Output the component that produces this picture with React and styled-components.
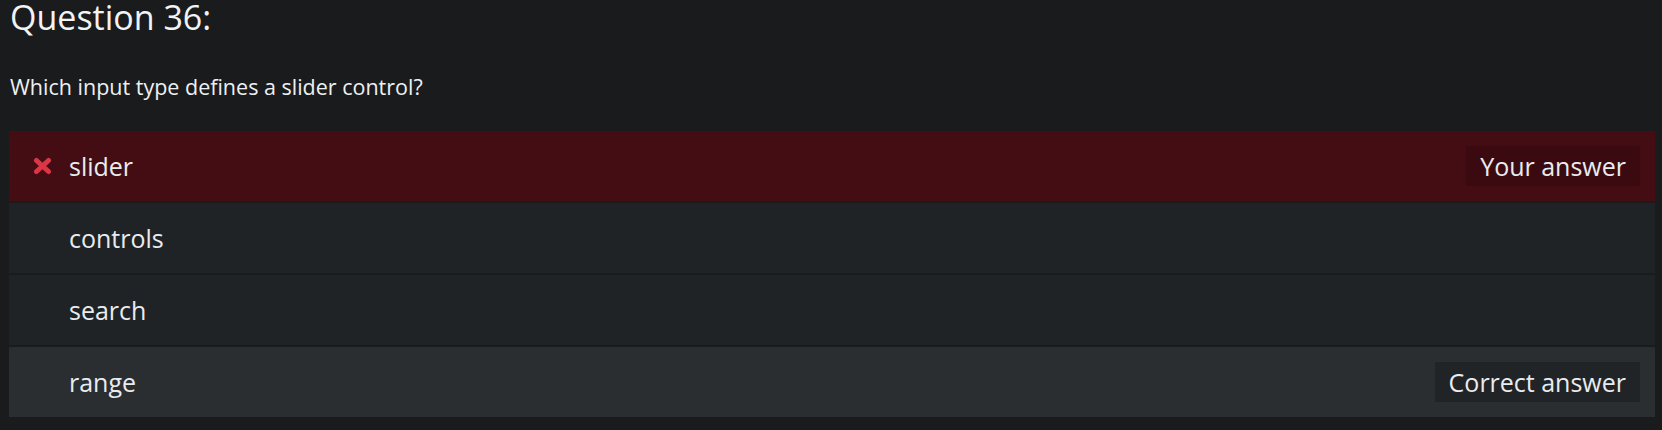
import React from "react";
import styled, { createGlobalStyle } from "styled-components";

const GlobalStyle = createGlobalStyle`
  html, body {
    margin: 0;
    padding: 0;
    background: #1a1b1d;
    color: #e9ecef;
    font-family: "Open Sans", "Noto Sans", sans-serif;
  }
`;

const answers = [
  { text: "slider", tone: "wrong", badge: "Your answer" },
  { text: "controls" },
  { text: "search" },
  { text: "range", tone: "correct", badge: "Correct answer" },
];

const rowBg = {
  wrong: "#440d14",
  correct: "#2b2e31",
  plain: "#202325",
};

const badgeBg = {
  wrong: "#3a0a10",
  correct: "#212426",
  plain: "#1a1b1d",
};

const CrossIcon = () => (
  <svg width="19" height="18" viewBox="0 0 19 18" aria-hidden="true">
    <path
      d="M3.5 3.5 L15.5 14.5 M15.5 3.5 L3.5 14.5"
      stroke="#dc3545"
      strokeWidth="5"
      strokeLinecap="round"
      fill="none"
    />
  </svg>
);

const App = () => (
  <>
    <GlobalStyle />
    <Page>
      <Title>Question 36:</Title>
      <Prompt>Which input type defines a slider control?</Prompt>
      <AnswerList>
        {answers.map((a) => (
          <AnswerRow key={a.text} tone={a.tone || "plain"}>
            <IconSlot>{a.tone === "wrong" && <CrossIcon />}</IconSlot>
            <AnswerText>{a.text}</AnswerText>
            {a.badge && <Badge tone={a.tone}>{a.badge}</Badge>}
          </AnswerRow>
        ))}
      </AnswerList>
    </Page>
  </>
);

const Page = styled.div`
  padding: 0 7px 13px 9px;
`;

const Title = styled.h2`
  margin: 0 0 0 1px;
  font-size: 34px;
  font-weight: 400;
  line-height: 34px;
  color: #f1f3f5;
`;

const Prompt = styled.p`
  margin: 38px 0 29px 1px;
  font-size: 21.5px;
  line-height: 30px;
  color: #eef0f2;
`;

const AnswerList = styled.div`
  display: flex;
  flex-direction: column;
  gap: 2px;
`;

const AnswerRow = styled.div`
  display: flex;
  align-items: center;
  height: 70px;
  padding: 0 15px 0 24px;
  background: ${(p) => rowBg[p.tone]};
`;

const IconSlot = styled.span`
  display: flex;
  align-items: center;
  width: 36px;
  height: 18px;
`;

const AnswerText = styled.span`
  flex: 1;
  font-size: 25px;
  line-height: 34px;
  color: #e9ecef;
`;

const Badge = styled.span`
  height: 40px;
  line-height: 40px;
  padding: 0 14px;
  font-size: 25px;
  color: #e9ecef;
  background: ${(p) => badgeBg[p.tone]};
`;

export default App;
